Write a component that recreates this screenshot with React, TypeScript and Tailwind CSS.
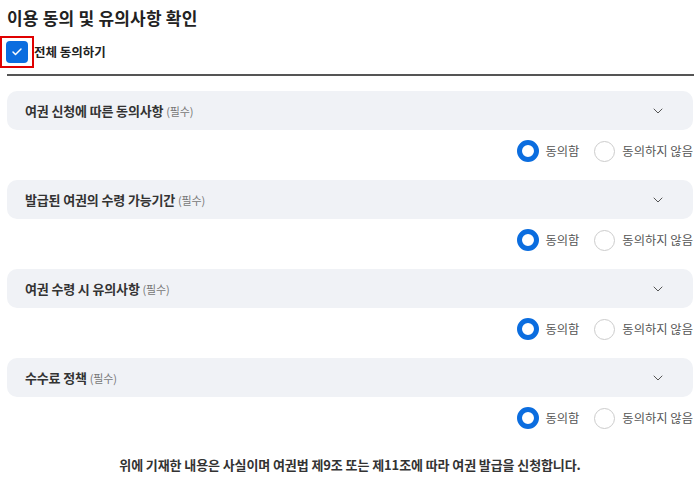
import { ChevronDown, Check } from "lucide-react";

const items = [
  "여권 신청에 따른 동의사항",
  "발급된 여권의 수령 가능기간",
  "여권 수령 시 유의사항",
  "수수료 정책",
];

const font = { fontFamily: '"Noto Sans CJK KR", "Noto Sans", sans-serif' };

export default function App() {
  return (
    <div className="w-[700px] h-[480px] bg-white text-[#222]" style={font}>
      <div className="pl-[7px] pr-[7px] pt-[4px]">
        <h1 className="text-[17px] font-bold leading-[27px] tracking-[0.2px]">이용 동의 및 유의사항 확인</h1>

        {/* all agree */}
        <div className="flex items-center -ml-[7px] mt-[5px]">
          <div className="w-[34px] h-[32px] border-2 border-[#e00000] flex items-center justify-center">
            <div className="w-[22px] h-[22px] rounded-[4px] bg-[#0b6ddf] flex items-center justify-center">
              <Check size={12} strokeWidth={3} className="text-white" />
            </div>
          </div>
          <span className="text-[12.5px] font-bold leading-none">전체 동의하기</span>
        </div>

        <div className="h-[2px] bg-[#555] mt-[6px] -mr-[1px]" />

        <div className="mt-[15px] flex flex-col">
          {items.map((title) => (
            <div key={title} className="h-[89px]">
              <div className="h-[39px] rounded-[10px] bg-[#f0f2f6] flex items-center justify-between pl-[18px] pr-[27px]">
                <p className="text-[13px] font-bold tracking-[-0.15px] text-[#333]">
                  {title} <span className="text-[11px] font-normal text-[#777]">(필수)</span>
                </p>
                <ChevronDown size={16} strokeWidth={1.5} className="text-[#555]" />
              </div>
              <div className="flex justify-end items-center mt-[10px] h-[22px]">
                <div className="flex items-center">
                  <span className="w-[22px] h-[22px] rounded-full border-[5px] border-[#0b6ddf] bg-white" />
                  <span className="ml-[6px] text-[12.3px] text-[#555]">동의함</span>
                </div>
                <div className="flex items-center ml-[15px]">
                  <span className="w-[21px] h-[21px] rounded-full border border-[#ccc] bg-white" />
                  <span className="ml-[7px] text-[12.3px] text-[#555]">동의하지 않음</span>
                </div>
              </div>
            </div>
          ))}
        </div>

        <p className="text-center text-[13px] font-bold text-[#333] tracking-[-0.1px] mt-[8px]">
          위에 기재한 내용은 사실이며 여권법 제9조 또는 제11조에 따라 여권 발급을 신청합니다.
        </p>
      </div>
    </div>
  );
}
